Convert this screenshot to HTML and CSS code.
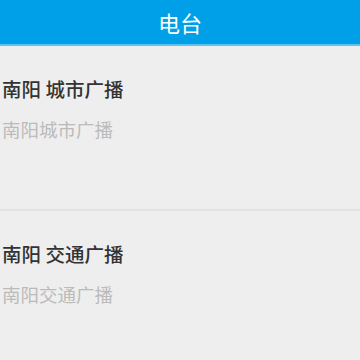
FILE: index.html
```html
<!DOCTYPE html>
<html>
<head>
  <meta charset="utf-8">
  <title>电台</title>
  <link rel="stylesheet" href="styles.css">
</head>
<body>
  <div class="header">电台</div>
  <ul class="station-list">
    <li class="station">
      <p class="station-name">南阳 城市广播</p>
      <p class="station-desc">南阳城市广播</p>
    </li>
    <li class="station">
      <p class="station-name">南阳 交通广播</p>
      <p class="station-desc">南阳交通广播</p>
    </li>
  </ul>
</body>
</html>
```

FILE: styles.css
```css
body {
  margin: 0;
  background: #eeeeee;
  font-family: "Noto Sans CJK SC", "Noto Sans", sans-serif;
}
.header {
  height: 44px;
  line-height: 44px;
  background: #00a0e8;
  border-bottom: 2px solid #5cc4f2;
  color: #ffffff;
  text-align: center;
  font-size: 22px;
}
.station-list {
  list-style: none;
  margin: 0;
  padding: 0;
}
.station {
  height: 163px;
  padding: 0 0 0 2px;
  border-bottom: 2px solid #e2e2e2;
}
.station-name {
  margin: 0;
  padding-top: 30px;
  font-size: 19.5px;
  font-weight: 500;
  line-height: 26px;
  color: #333333;
}
.station-desc {
  margin: 0;
  padding-top: 14px;
  font-size: 18.5px;
  line-height: 26px;
  color: #bbbbbb;
}
```
